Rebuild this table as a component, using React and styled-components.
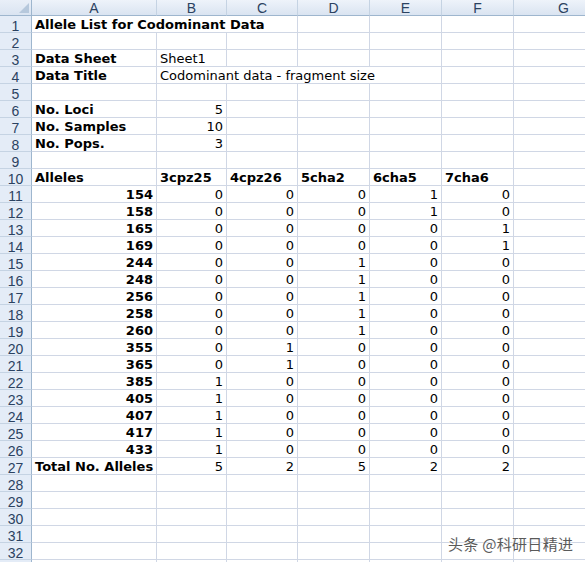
import React from "react";
import styled, { createGlobalStyle } from "styled-components";

const GlobalStyle = createGlobalStyle`
  html, body {
    margin: 0;
    padding: 0;
    background: #ffffff;
    overflow: hidden;
  }
`;

const Sheet = styled.div`
  position: relative;
  width: 585px;
  height: 562px;
  overflow: hidden;
  display: grid;
  grid-template-columns: 32px 125px 70px 71px 72px 72px 72px 100px;
  grid-template-rows: 16px repeat(33, 17px);
  font-family: "DejaVu Sans", Verdana, sans-serif;
  font-size: 13px;
  color: #000;
`;

const Corner = styled.div`
  position: relative;
  background: linear-gradient(#e9eff8, #dae4f1);
  border-right: 1px solid #9eb6ce;
  border-bottom: 1px solid #9eb6ce;
  &::after {
    content: "";
    position: absolute;
    right: 2px;
    bottom: 2px;
    width: 0;
    height: 0;
    border-left: 10px solid transparent;
    border-bottom: 10px solid #b6c8dc;
  }
`;

const ColHead = styled.div`
  background: linear-gradient(#eef3fa, #dae4f1);
  border-right: 1px solid #c5d3e3;
  border-bottom: 1px solid #9eb6ce;
  display: flex;
  align-items: center;
  justify-content: center;
  font-family: "Liberation Sans", Arial, sans-serif;
  font-size: 14px;
  color: #2b4261;
`;

const RowHead = styled.div`
  background: #e4ecf7;
  border-right: 1px solid #9eb6ce;
  border-bottom: 1px solid #c5d3e3;
  display: flex;
  align-items: center;
  justify-content: center;
  padding-top: 3px;
  box-sizing: border-box;
  font-family: "Liberation Sans", Arial, sans-serif;
  font-size: 14px;
  line-height: 14px;
  color: #2b4261;
`;

const Cell = styled.div`
  grid-column: span ${(p) => p.$span || 1};
  border-right: 1px solid #d0d7e5;
  border-bottom: 1px solid #d0d7e5;
  display: flex;
  align-items: flex-end;
  justify-content: ${(p) => (p.$right ? "flex-end" : "flex-start")};
  padding: 0 3px 0 3px;
  font-weight: ${(p) => (p.$bold ? 700 : 400)};
  white-space: nowrap;
  overflow: visible;
  line-height: 14px;
  min-width: 0;
`;

const Watermark = styled.div`
  position: absolute;
  left: 448px;
  top: 533px;
  font-family: "Noto Sans CJK SC", sans-serif;
  font-size: 15px;
  color: #5a5a5a;
  text-shadow: 0 0 2px #fff, 0 0 2px #fff;
  letter-spacing: 0.3px;
`;

const cols = ["A", "B", "C", "D", "E", "F", "G"];

const alleles = [
  ["154", 0, 0, 0, 1, 0],
  ["158", 0, 0, 0, 1, 0],
  ["165", 0, 0, 0, 0, 1],
  ["169", 0, 0, 0, 0, 1],
  ["244", 0, 0, 1, 0, 0],
  ["248", 0, 0, 1, 0, 0],
  ["256", 0, 0, 1, 0, 0],
  ["258", 0, 0, 1, 0, 0],
  ["260", 0, 0, 1, 0, 0],
  ["355", 0, 1, 0, 0, 0],
  ["365", 0, 1, 0, 0, 0],
  ["385", 1, 0, 0, 0, 0],
  ["405", 1, 0, 0, 0, 0],
  ["407", 1, 0, 0, 0, 0],
  ["417", 1, 0, 0, 0, 0],
  ["433", 1, 0, 0, 0, 0],
];

// each row: list of cells { text, span, bold, right }
const blank = (n) => Array.from({ length: n }, () => ({}));

const buildRows = () => {
  const rows = [];
  rows.push([{ text: "Allele List for Codominant Data", bold: true, span: 3 }, ...blank(4)]);
  rows.push(blank(7));
  rows.push([{ text: "Data Sheet", bold: true }, { text: "Sheet1" }, ...blank(5)]);
  rows.push([
    { text: "Data Title", bold: true },
    { text: "Codominant data - fragment size", span: 4 },
    ...blank(2),
  ]);
  rows.push(blank(7));
  rows.push([{ text: "No. Loci", bold: true }, { text: "5", right: true }, ...blank(5)]);
  rows.push([{ text: "No. Samples", bold: true }, { text: "10", right: true }, ...blank(5)]);
  rows.push([{ text: "No. Pops.", bold: true }, { text: "3", right: true }, ...blank(5)]);
  rows.push(blank(7));
  rows.push([
    ...["Alleles", "3cpz25", "4cpz26", "5cha2", "6cha5", "7cha6"].map((t) => ({ text: t, bold: true })),
    {},
  ]);
  alleles.forEach(([a, ...vals]) => {
    rows.push([
      { text: a, bold: true, right: true },
      ...vals.map((v) => ({ text: String(v), right: true })),
      {},
    ]);
  });
  rows.push([
    { text: "Total No. Alleles", bold: true },
    ...[5, 2, 5, 2, 2].map((v) => ({ text: String(v), right: true })),
    {},
  ]);
  while (rows.length < 33) rows.push(blank(7));
  return rows;
};

const App = () => {
  const rows = buildRows();
  return (
    <>
      <GlobalStyle />
      <Sheet>
        <Corner />
        {cols.map((c) => (
          <ColHead key={c}>{c}</ColHead>
        ))}
        {rows.map((cells, r) => (
          <React.Fragment key={r}>
            {/* row 33 only peeks in at the bottom edge, its number is off-screen */}
            <RowHead>{r < 32 ? r + 1 : ""}</RowHead>
            {cells.map((c, i) => (
              <Cell key={i} $span={c.span} $bold={c.bold} $right={c.right}>
                {c.text}
              </Cell>
            ))}
          </React.Fragment>
        ))}
        <Watermark>头条 @科研日精进</Watermark>
      </Sheet>
    </>
  );
};

export default App;
